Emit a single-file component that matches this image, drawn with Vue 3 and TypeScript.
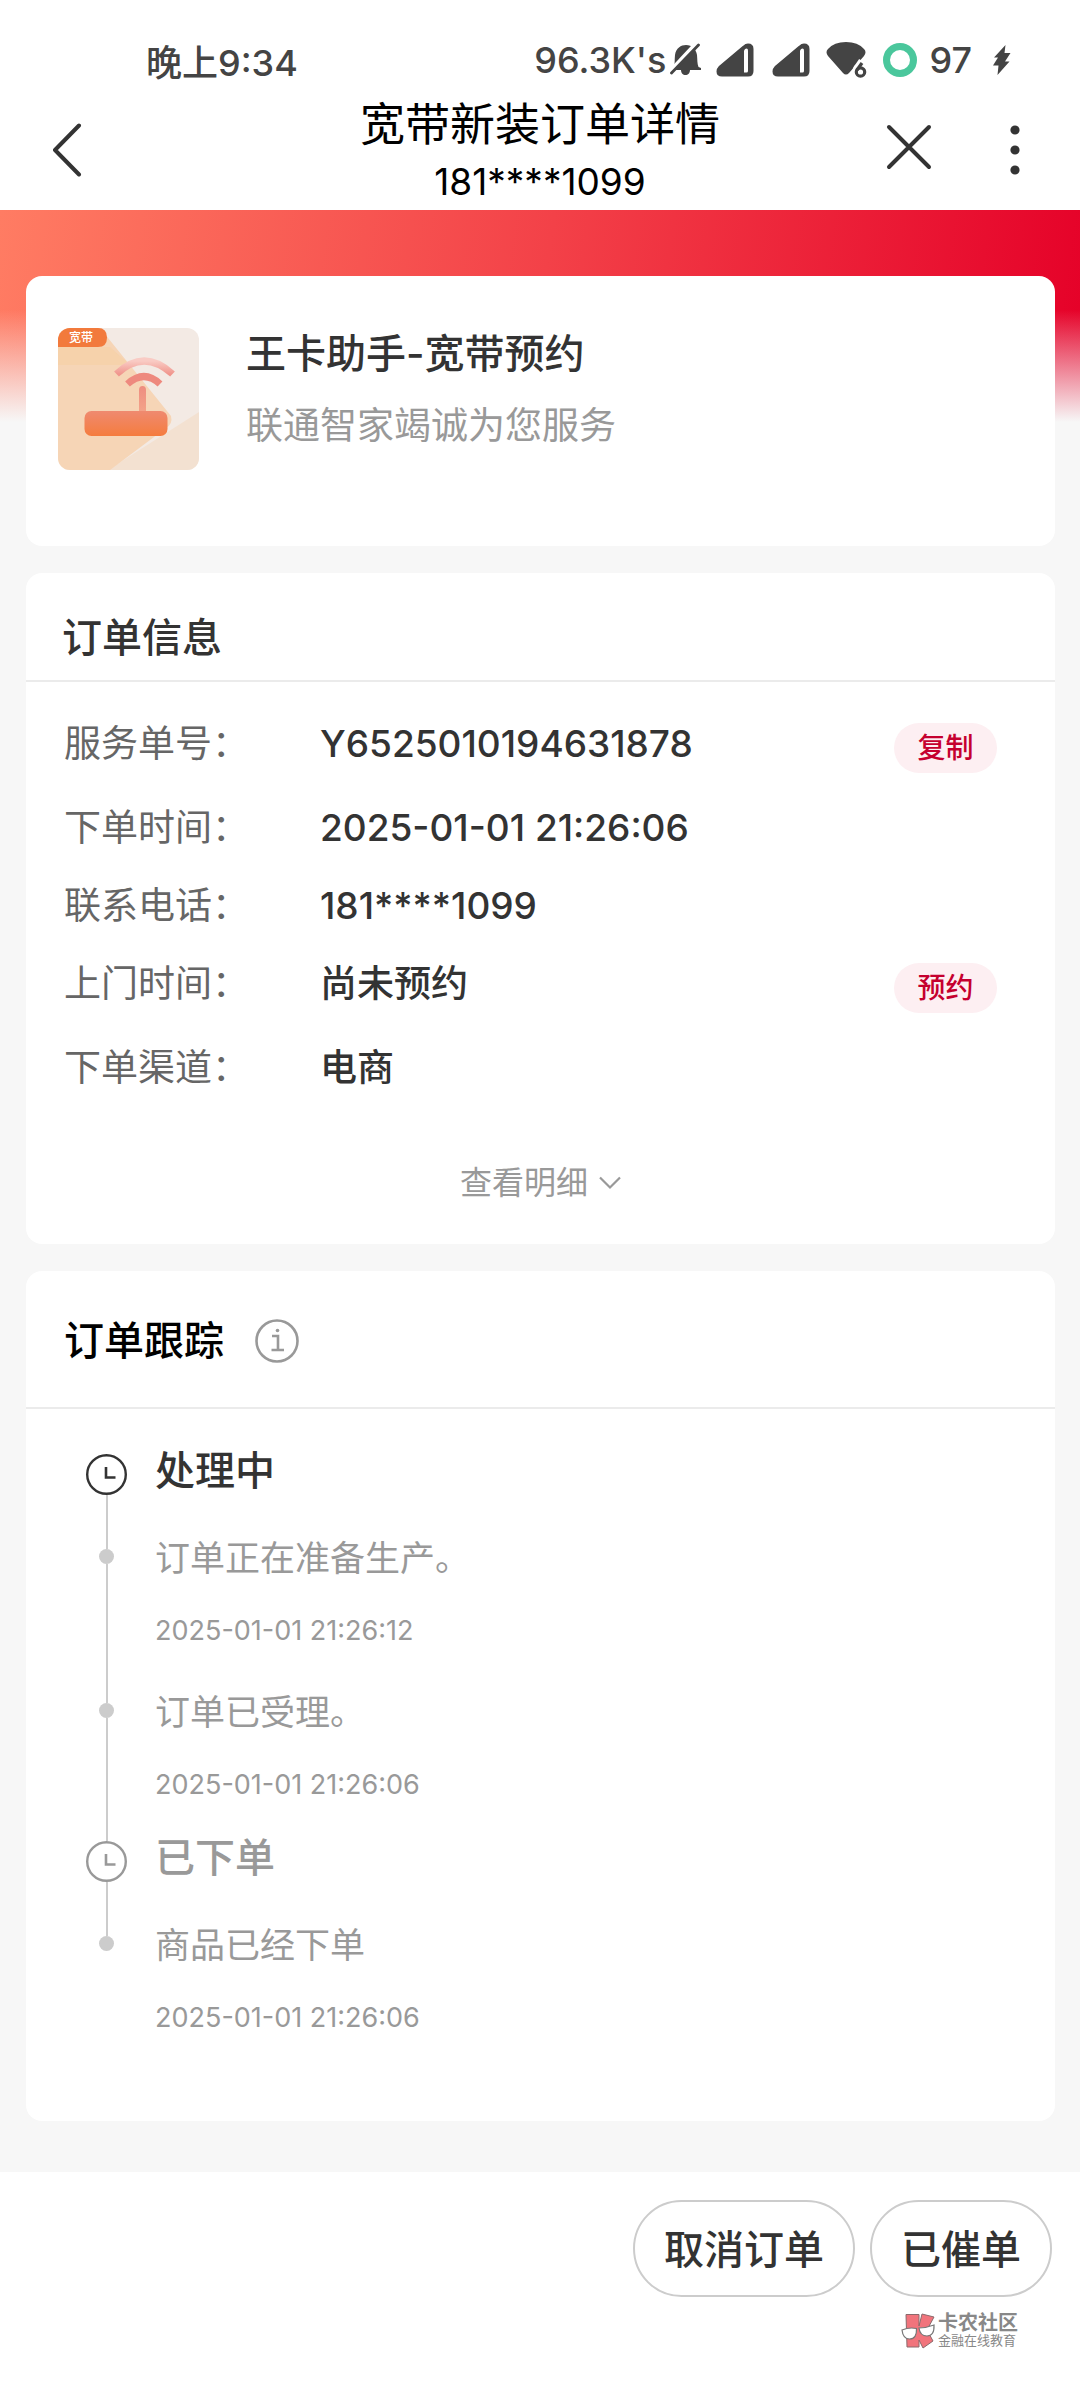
<script setup lang="ts">
interface InfoRow {
  label: string
  value: string
  action?: string
}

interface TrackEntry {
  kind: 'stage' | 'event'
  text: string
  time?: string
  active?: boolean
}

const infoRows: InfoRow[] = [
  { label: '服务单号：', value: 'Y6525010194631878', action: '复制' },
  { label: '下单时间：', value: '2025-01-01 21:26:06' },
  { label: '联系电话：', value: '181****1099' },
  { label: '上门时间：', value: '尚未预约', action: '预约' },
  { label: '下单渠道：', value: '电商' },
]

const entries: TrackEntry[] = [
  { kind: 'stage', text: '处理中', active: true },
  { kind: 'event', text: '订单正在准备生产。', time: '2025-01-01 21:26:12' },
  { kind: 'event', text: '订单已受理。', time: '2025-01-01 21:26:06' },
  { kind: 'stage', text: '已下单' },
  { kind: 'event', text: '商品已经下单', time: '2025-01-01 21:26:06' },
]

const beforeStage = (i: number): boolean => entries[i + 1]?.kind === 'stage'
</script>

<template>
  <div class="page">
    <header class="top">
      <div class="status">
        <span>晚上9:34</span>
        <div class="status-right">
          <span>96.3K's</span>
          <svg class="bell" width="32" height="34" viewBox="0 0 32 34" aria-hidden="true">
            <path d="M4 24C5 21 4.500 16 5 12C6 5 11 2 16 2C22 2 26 6 27 12C27.500 17 27 20 28.500 24L31 25V27H20C20 30 18 32 15.500 32C13 32 11 30 11 27H3Z" fill="#444" />
            <path d="M0.500 28L26.500 0" stroke="#fff" stroke-width="4" />
            <path d="M1.500 30L28.500 2" stroke="#444" stroke-width="2.800" stroke-linecap="round" />
          </svg>
          <svg v-for="n in 2" :key="n" class="signal" width="38" height="34" viewBox="0 0 38 34" aria-hidden="true">
            <path d="M6 32H32Q36 32 36 28V6Q36 2 32 2Q30 2 28 4L4 24Q2 26 2 28.500Q2 32 6 32Z" fill="#444" stroke="#444" stroke-width="3" />
            <path d="M28 7.500Q29 5.500 30.500 5.500Q32 5.500 32 7.500V28Q32 29.500 30.500 29.500H28Z" fill="#fff" />
          </svg>
          <svg class="wifi" width="41" height="38" viewBox="0 0 41 38" aria-hidden="true">
            <path d="M2 8Q8 1 20 1Q32 1 38 8Q41 11 38 15L23 32Q20 35 17 32L2 15Q-1 11 2 8Z" fill="#444" />
            <circle cx="34.500" cy="30" r="8" fill="#fff" />
            <path d="M36 20L30.500 28" stroke="#fff" stroke-width="7" />
            <circle cx="34.500" cy="31" r="4.200" fill="none" stroke="#444" stroke-width="3.200" />
            <path d="M36 22L31 29" stroke="#444" stroke-width="3.200" />
          </svg>
          <svg class="ring" width="34" height="34" viewBox="0 0 34 34" aria-hidden="true">
            <circle cx="17" cy="17" r="13.500" fill="none" stroke="#4ac79c" stroke-width="7" />
          </svg>
          <span class="battery">97</span>
          <svg class="bolt" width="18" height="30" viewBox="0 0 18 30" aria-hidden="true">
            <path d="M12.500 0L1 12.500H5L0 20.500H5.500L4.500 30L16.500 16.500H12L17.500 8H11.500Z" fill="#444" />
          </svg>
        </div>
      </div>
      <nav class="nav">
        <button class="icon-btn back" type="button" aria-label="返回">
          <svg width="30" height="54" viewBox="0 0 30 54">
            <path d="M27 2.500L3 27L27 51.500" fill="none" stroke="#333" stroke-width="4" stroke-linecap="round" stroke-linejoin="round" />
          </svg>
        </button>
        <div class="nav-title">
          <h1>宽带新装订单详情</h1>
          <p>181****1099</p>
        </div>
        <div class="nav-actions">
          <button class="icon-btn close" type="button" aria-label="关闭">
            <svg width="46" height="46" viewBox="0 0 46 46">
              <path d="M3 3L43 43M43 3L3 43" fill="none" stroke="#333" stroke-width="4" stroke-linecap="round" />
            </svg>
          </button>
          <button class="icon-btn more" type="button" aria-label="更多">
            <svg width="10" height="50" viewBox="0 0 10 50">
              <circle cx="5" cy="5" r="4.600" fill="#333" />
              <circle cx="5" cy="25" r="4.600" fill="#333" />
              <circle cx="5" cy="45" r="4.600" fill="#333" />
            </svg>
          </button>
        </div>
      </nav>
    </header>

    <main class="content">
      <section class="card product">
        <svg class="tile" width="141" height="142" viewBox="0 0 141 142" role="img" aria-label="宽带">
          <defs>
            <clipPath id="tile-clip"><rect width="141" height="142" rx="12" /></clipPath>
            <linearGradient id="router" x1="0" y1="0" x2="0" y2="1">
              <stop offset="0" stop-color="#ef8a70" />
              <stop offset="1" stop-color="#f57c3e" />
            </linearGradient>
            <linearGradient id="antenna" x1="0" y1="0" x2="0" y2="1">
              <stop offset="0" stop-color="#ee8d80" />
              <stop offset="1" stop-color="#f4a589" />
            </linearGradient>
            <linearGradient id="wave" x1="0" y1="0" x2="0" y2="1">
              <stop offset="0" stop-color="#f9cbc4" />
              <stop offset="1" stop-color="#f0968d" />
            </linearGradient>
          </defs>
          <g clip-path="url(#tile-clip)">
            <rect width="141" height="142" fill="#f3eae4" />
            <path d="M141 84L50 142H141Z" fill="#f3e1d1" />
            <path d="M0 0H42L113 88Q115 96 108 100L52 142H0Z" fill="#f6d5b6" />
            <path d="M0 19H52L72 37H0Z" fill="#f6cf9f" opacity="0.500" />
            <path d="M0 0H40Q49 0 49 9.500Q49 19 40 19H0Z" fill="#f27a3c" />
            <path d="M58.500 46Q86 20 114.500 46" fill="none" stroke="url(#wave)" stroke-width="7" />
            <path d="M69.500 56Q86 41 102 56" fill="none" stroke="#ee897e" stroke-width="7" />
            <path d="M81 86V62Q81 58 84.500 58Q88 58 88 62V86Z" fill="url(#antenna)" />
            <rect x="26.500" y="83" width="83" height="25" rx="7" fill="url(#router)" />
          </g>
          <text x="11" y="14" font-size="12" font-weight="500" fill="#fff">宽带</text>
        </svg>
        <div class="product-text">
          <h2>王卡助手-宽带预约</h2>
          <p>联通智家竭诚为您服务</p>
        </div>
      </section>

      <section class="card">
        <div class="card-head info-head"><h2>订单信息</h2></div>
        <dl class="info">
          <div v-for="row in infoRows" :key="row.label" class="info-row">
            <dt>{{ row.label }}</dt>
            <dd>{{ row.value }}</dd>
            <button v-if="row.action" class="pill" type="button">{{ row.action }}</button>
          </div>
        </dl>
        <button class="expand" type="button">
          查看明细
          <svg width="22" height="14" viewBox="0 0 22 14" aria-hidden="true">
            <path d="M1 1.500L11 11.500L21 1.500" fill="none" stroke="#999" stroke-width="2.200" />
          </svg>
        </button>
      </section>

      <section class="card">
        <div class="card-head track-head">
          <h2>订单跟踪</h2>
          <button class="icon-btn" type="button" aria-label="说明">
            <svg width="44" height="44" viewBox="0 0 44 44">
              <circle cx="22" cy="22" r="20.500" fill="none" stroke="#999" stroke-width="2.600" />
              <path d="M17 17H23V31M16.500 31H29" fill="none" stroke="#999" stroke-width="2.600" />
              <circle cx="22.500" cy="11.500" r="1.800" fill="#999" />
            </svg>
          </button>
        </div>
        <ol class="track">
          <li
            v-for="(entry, i) in entries"
            :key="i"
            :class="['entry', entry.kind, { active: entry.active, 'before-stage': beforeStage(i) }]"
          >
            <div class="rail" aria-hidden="true">
              <span class="lead"></span>
              <svg v-if="entry.kind === 'stage'" class="clock" width="41" height="41" viewBox="0 0 41 41">
                <circle cx="20.500" cy="20.500" r="19.300" fill="none" stroke="currentColor" stroke-width="2.400" />
                <path d="M20 13V23.500H29.500" fill="none" stroke="currentColor" stroke-width="2.600" />
              </svg>
              <span v-else class="dot"></span>
              <span class="tail"></span>
            </div>
            <div class="entry-body">
              <h3 v-if="entry.kind === 'stage'">{{ entry.text }}</h3>
              <template v-else>
                <p>{{ entry.text }}</p>
                <time>{{ entry.time }}</time>
              </template>
            </div>
          </li>
        </ol>
      </section>
    </main>

    <footer class="footer">
      <div class="actions">
        <button type="button">取消订单</button>
        <button type="button">已催单</button>
      </div>
      <div class="brand">
        <svg width="34" height="36" viewBox="0 0 34 36" aria-hidden="true">
          <path d="M5 1.500H18V13L21 1L33 4L26 17L32 28L22 35L18 27V34H6Z" fill="#f1747c" stroke="#8a6a6c" stroke-width="1" />
          <path d="M1 17Q8 14 15.500 15.500Q16 26 8.500 26Q2 26 1 17Z" fill="#fff" stroke="#777" stroke-width="1.200" />
          <path d="M18 15Q25 15 33 12Q33.500 23 26 23Q19 23 18 15Z" fill="#fff" stroke="#777" stroke-width="1.200" />
        </svg>
        <div class="brand-text">
          <strong>卡农社区</strong>
          <span>金融在线教育</span>
        </div>
      </div>
    </footer>
  </div>
</template>

<style>
body {
  background: #fff;
}
</style>

<style scoped>
.page {
  min-height: 100vh;
  font-family: Inter, "Noto Sans CJK SC", sans-serif;
  color: #333;
}
h1,
h2,
h3,
p,
dl,
dd,
ol {
  margin: 0;
  padding: 0;
  font-weight: 400;
}
button {
  font-family: inherit;
  cursor: pointer;
}
svg {
  display: block;
  flex: none;
}
.icon-btn {
  padding: 0;
  border: 0;
  background: none;
}

.top {
  background: #fff;
}
.status {
  display: flex;
  align-items: center;
  justify-content: space-between;
  height: 60px;
  padding: 30px 69px 0 146px;
  font-size: 36px;
  font-weight: 500;
  color: #444;
}
.status-right {
  display: flex;
  align-items: center;
}
.bell {
  margin-left: 4px;
}
.signal {
  margin-left: 14px;
}
.signal + .signal {
  margin-left: 18px;
}
.wifi {
  margin-left: 16px;
}
.ring {
  margin-left: 16px;
}
.battery {
  margin-left: 12px;
}
.bolt {
  margin-left: 21px;
}
.nav {
  display: grid;
  grid-template-columns: 1fr auto 1fr;
  align-items: center;
  height: 120px;
  padding: 0 52px;
}
.back {
  justify-self: start;
}
.nav-title {
  text-align: center;
  color: #000;
}
.nav-title h1 {
  font-size: 45px;
  line-height: 64px;
}
.nav-title p {
  font-size: 37px;
  line-height: 50px;
}
.nav-actions {
  display: flex;
  align-items: center;
  justify-content: flex-end;
  gap: 78px;
  padding-right: 8px;
}
.close {
  padding-bottom: 6px;
}

.content {
  display: flex;
  flex-direction: column;
  gap: 27px;
  padding: 66px 25px 51px 26px;
  background:
    linear-gradient(to bottom, rgba(247, 247, 247, 0) 100px, #f7f7f7 212px) no-repeat,
    linear-gradient(98deg, #ff7c63, #f34148 50%, #e50028) 0 0 / 100% 212px no-repeat,
    #f7f7f7;
}
.card {
  background: #fff;
  border-radius: 16px;
}
.card h2 {
  font-size: 40px;
  line-height: 48px;
  font-weight: 500;
}
.product {
  display: flex;
  gap: 47px;
  padding: 52px 32px 76px;
}
.product-text {
  padding-top: 2px;
}
.product-text p {
  margin-top: 25px;
  font-size: 37px;
  line-height: 46px;
  color: #999;
}

.card-head {
  display: flex;
  align-items: center;
  border-bottom: 2px solid #ebebeb;
}
.info-head {
  padding: 41px 36px 18px;
}
.track-head {
  gap: 31px;
  padding: 46px 38px 42px;
  color: #000;
}
.info {
  display: flex;
  flex-direction: column;
  gap: 31px;
  padding: 38px 58px 0 38px;
  font-size: 37px;
  line-height: 47px;
}
.info-row {
  display: flex;
  align-items: flex-start;
}
.info dt {
  flex: none;
  width: 256px;
  color: #666;
}
.info dd {
  flex: 1;
  font-weight: 500;
}
.pill {
  width: 103px;
  height: 50px;
  margin-top: 3px;
  padding: 0;
  border: 0;
  border-radius: 25px;
  background: #fdeff2;
  color: #c5002f;
  font-size: 28px;
  line-height: 46px;
  font-weight: 500;
}
.expand {
  display: flex;
  align-items: center;
  justify-content: center;
  gap: 11px;
  width: 100%;
  padding: 68px 0 37px;
  border: 0;
  background: none;
  color: #999;
  font-size: 32px;
  line-height: 48px;
}

.track {
  padding: 37px 60px 85px;
  list-style: none;
}
.entry {
  display: flex;
  gap: 28px;
  color: #999;
}
.active {
  color: #333;
}
.rail {
  display: flex;
  flex-direction: column;
  align-items: center;
  width: 41px;
}
.lead,
.tail {
  width: 2px;
  background: #ccc;
}
.tail {
  flex: 1;
}
.stage .lead {
  height: 8px;
}
.event .lead {
  height: 14px;
}
.entry:first-child .lead,
.entry:last-child .tail {
  background: none;
}
.dot {
  width: 15px;
  height: 15px;
  border-radius: 50%;
  background: #ccc;
}
.entry-body {
  padding: 1px 0 40px;
}
.before-stage .entry-body {
  padding-bottom: 30px;
}
.entry:last-child .entry-body {
  padding-bottom: 0;
}
.entry h3 {
  font-size: 40px;
  line-height: 48px;
  font-weight: 500;
}
.entry p {
  font-size: 35px;
  line-height: 44px;
}
.entry time {
  display: block;
  margin-top: 33px;
  font-size: 27px;
  line-height: 36px;
}

.footer {
  padding: 28px 28px 0;
  background: #fff;
}
.actions {
  display: flex;
  justify-content: flex-end;
  gap: 15px;
}
.actions button {
  height: 97px;
  padding: 0 29px 4px;
  border: 2px solid #ccc;
  border-radius: 49px;
  background: #fff;
  color: #333;
  font-size: 40px;
  font-weight: 500;
}
.brand {
  display: flex;
  justify-content: flex-end;
  gap: 3px;
  padding: 16px 34px 0 0;
}
.brand-text {
  display: flex;
  flex-direction: column;
  color: #888;
}
.brand-text strong {
  font-size: 20px;
  line-height: 20px;
}
.brand-text span {
  font-size: 13px;
  line-height: 15px;
}
</style>
